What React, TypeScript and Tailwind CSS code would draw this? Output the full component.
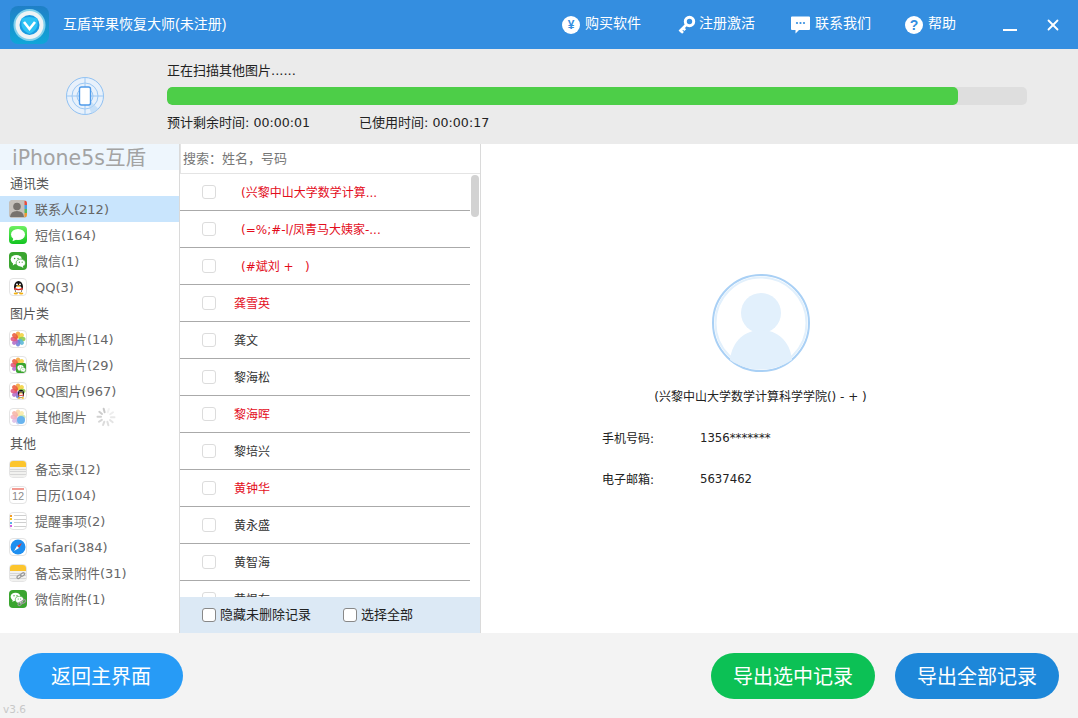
import React from "react";
import { X } from "lucide-react";

const font = { fontFamily: '"DejaVu Sans","Noto Sans CJK SC",sans-serif' };
const cjk = '"Liberation Sans","Noto Sans CJK SC",sans-serif';

function Tile({ children, bg = "#fff", border = true }: { children?: React.ReactNode; bg?: string; border?: boolean }) {
  return (
    <span
      className={"relative flex h-[18px] w-[18px] shrink-0 items-center justify-center overflow-hidden rounded-[4px] " + (border ? "border border-[#e4e4e4]" : "")}
      style={{ background: bg }}
    >
      {children}
    </span>
  );
}

function Petals({ faded = false }: { faded?: boolean }) {
  const cols = ["#f2a33a", "#f3d23e", "#8ccb4e", "#58b7d6", "#6d7fd8", "#b06cc8", "#e2557e", "#ea5c3d"];
  return (
    <svg width="16" height="16" viewBox="0 0 16 16" opacity={faded ? 0.45 : 1}>
      {cols.map((c, i) => (
        <ellipse key={i} cx="8" cy="3.9" rx="2.3" ry="3.4" fill={c} opacity="0.88" transform={`rotate(${i * 45} 8 8)`} />
      ))}
    </svg>
  );
}

function Penguin({ s = 14 }: { s?: number }) {
  return (
    <svg width={s} height={s} viewBox="0 0 14 14">
      <ellipse cx="7" cy="6.5" rx="4.2" ry="5.6" fill="#111" />
      <ellipse cx="7" cy="8.6" rx="3" ry="3.3" fill="#fff" />
      <circle cx="5.6" cy="4.1" r="0.9" fill="#fff" />
      <circle cx="8.4" cy="4.1" r="0.9" fill="#fff" />
      <ellipse cx="7" cy="5.6" rx="1.8" ry="0.8" fill="#f5b10f" />
      <path d="M3 7.3 Q7 9.4 11 7.3 L11 8.6 Q7 10.4 3 8.6Z" fill="#e0231c" />
      <ellipse cx="4.5" cy="12.6" rx="2" ry="0.9" fill="#f5b10f" />
      <ellipse cx="9.5" cy="12.6" rx="2" ry="0.9" fill="#f5b10f" />
    </svg>
  );
}

function Wechat({ w = 13 }: { w?: number }) {
  return (
    <svg width={w} height={w} viewBox="0 0 16 16">
      <ellipse cx="6.3" cy="6.6" rx="5.6" ry="4.7" fill="#fff" />
      <path d="M3.2 9.4 L2.8 12.6 L5.6 10.6Z" fill="#fff" />
      <ellipse cx="10.8" cy="10" rx="4.7" ry="3.9" fill="#fff" stroke="#3aa52f" strokeWidth="0.7" />
      <path d="M12.6 12.6 L13.4 14.9 L10.8 13.5Z" fill="#fff" />
      <circle cx="4.6" cy="5.4" r="0.75" fill="#3aa52f" />
      <circle cx="8" cy="5.4" r="0.75" fill="#3aa52f" />
      <circle cx="9.4" cy="9.2" r="0.6" fill="#3aa52f" />
      <circle cx="12.2" cy="9.2" r="0.6" fill="#3aa52f" />
    </svg>
  );
}

function Clip() {
  return (
    <svg className="absolute bottom-0 right-0" width="10" height="10" viewBox="0 0 10 10" fill="none" stroke="#9a9a9a" strokeWidth="1.2">
      <rect x="1" y="4.5" width="4.4" height="2.6" rx="1.3" transform="rotate(-40 3 6)" />
      <rect x="4.4" y="2.2" width="4.4" height="2.6" rx="1.3" transform="rotate(-40 6.6 3.5)" />
    </svg>
  );
}

function NoteLines({ yellow = "#fcc52d" }: { yellow?: string }) {
  return (
    <span className="flex h-full w-full flex-col">
      <span className="h-[6px] w-full" style={{ background: yellow }} />
      <span className="flex flex-1 flex-col justify-around bg-[#f1f1ef] py-[1px]">
        <span className="h-px w-full bg-[#d6d6d6]" />
        <span className="h-px w-full bg-[#d6d6d6]" />
        <span className="h-px w-full bg-[#d6d6d6]" />
      </span>
    </span>
  );
}

function Spinner() {
  return (
    <svg width="20" height="20" viewBox="0 0 20 20" className="ml-[9px]">
      {Array.from({ length: 10 }).map((_, i) => (
        <rect key={i} x="9" y="0.5" width="2" height="5.5" rx="1" fill="#bdbdbd" opacity={0.2 + (i % 10) * 0.07} transform={`rotate(${i * 36 + 20} 10 10)`} />
      ))}
    </svg>
  );
}

const icons: Record<string, React.ReactNode> = {
  contacts: (
    <Tile bg="#b7b3ad" border={false}>
      <svg width="18" height="18" viewBox="0 0 18 18">
        <rect width="18" height="18" fill="#c5c1bb" />
        <circle cx="8" cy="6.5" r="3.8" fill="#77736e" />
        <path d="M1 17 Q1.5 11 8 11 Q14.5 11 15 17Z" fill="#77736e" />
        <rect x="15.5" y="1" width="2.5" height="4" fill="#e84a3d" />
        <rect x="15.5" y="5" width="2.5" height="4" fill="#4a9fe0" />
        <rect x="15.5" y="9" width="2.5" height="4" fill="#58b85a" />
        <rect x="15.5" y="13" width="2.5" height="4" fill="#f09a30" />
      </svg>
    </Tile>
  ),
  sms: (
    <Tile bg="linear-gradient(#6ff063,#12c420)" border={false}>
      <svg width="18" height="18" viewBox="0 0 18 18">
        <ellipse cx="9" cy="8.5" rx="7" ry="5.6" fill="#fff" />
        <path d="M4.5 12 L3.4 15.2 L7.6 13.6Z" fill="#fff" />
      </svg>
    </Tile>
  ),
  wechat: (
    <Tile bg="#3aa52f" border={false}>
      <Wechat w={16} />
    </Tile>
  ),
  qq: (
    <Tile>
      <Penguin s={15} />
    </Tile>
  ),
  photos: (
    <Tile>
      <Petals />
    </Tile>
  ),
  wxphotos: (
    <Tile>
      <Petals />
      <span className="absolute bottom-0 right-0 flex h-[10px] w-[10px] items-center justify-center rounded-[2px] bg-[#3aa52f]">
        <Wechat w={9} />
      </span>
    </Tile>
  ),
  qqphotos: (
    <Tile>
      <Petals />
      <span className="absolute bottom-0 right-0 flex">
        <Penguin s={10} />
      </span>
    </Tile>
  ),
  other: (
    <Tile>
      <Petals faded />
      <span className="absolute bottom-[1px] right-[1px] h-[8px] w-[8px] rounded-full bg-[#69b4ee]" />
    </Tile>
  ),
  notes: (
    <Tile>
      <NoteLines />
    </Tile>
  ),
  calendar: (
    <Tile>
      <span className="flex h-full w-full flex-col items-center">
        <span className="mt-[1px] h-[2px] w-[12px] bg-[#f29a92]" />
        <span className="text-[11px] leading-[12px] text-[#8c8c8c]" style={{ fontFamily: '"Liberation Sans",sans-serif' }}>12</span>
      </span>
    </Tile>
  ),
  reminder: (
    <Tile>
      <span className="flex h-full w-full flex-col justify-around py-[1px]">
        {["#f59a23", "#f5c423", "#5bb0e8", "#d060e0"].map((c) => (
          <span key={c} className="flex items-center gap-[2px]">
            <span className="h-[2px] w-[2px]" style={{ background: c }} />
            <span className="h-px flex-1 bg-[#cfcfcf]" />
          </span>
        ))}
      </span>
    </Tile>
  ),
  safari: (
    <Tile>
      <svg width="16" height="16" viewBox="0 0 16 16">
        <circle cx="8" cy="8" r="7.5" fill="#1e8ff0" />
        <path d="M12 4 L7 7 L9 9Z" fill="#f0352a" />
        <path d="M4 12 L7 7 L9 9Z" fill="#fff" />
      </svg>
    </Tile>
  ),
  noteclip: (
    <Tile>
      <NoteLines />
      <Clip />
    </Tile>
  ),
  wxclip: (
    <Tile bg="#3aa52f" border={false}>
      <span className="absolute left-[1px] top-[1px] flex">
        <Wechat w={14} />
      </span>
      <Clip />
    </Tile>
  ),
};

function Cat({ t }: { t: string }) {
  return <div className="flex h-[26px] items-center pl-[10px] pt-[1px] text-[13px] text-[#555]">{t}</div>;
}

function Item({ icon, t, active, extra }: { icon: string; t: string; active?: boolean; extra?: React.ReactNode }) {
  return (
    <div className={"flex h-[26px] items-center pl-[9px] text-[13px] text-[#666] " + (active ? "bg-[#c9e5fd]" : "")}>
      {icons[icon]}
      <span className="ml-[8px] pt-[1px]">{t}</span>
      {extra}
    </div>
  );
}

function Row({ name, red, indent }: { name: string; red?: boolean; indent?: boolean }) {
  return (
    <div className="flex h-[37px] shrink-0 items-center border-b border-[#aaaaaa]">
      <span className="ml-[22px] h-[14px] w-[14px] shrink-0 rounded-[3px] border border-[#dcdcdc] bg-white" />
      <span
        className={(indent ? "ml-[25px] " : "ml-[18px] ") + "whitespace-pre pt-[1px] text-[12px] " + (red ? "text-[#e30d1c]" : "text-[#333]")}
      >
        {name}
      </span>
    </div>
  );
}

function Check({ label }: { label: string }) {
  return (
    <span className="flex items-center">
      <span className="h-[14px] w-[14px] rounded-[3px] border border-[#888] bg-white" />
      <span className="ml-[4px] -mt-[1px] text-[13px] text-[#222]">{label}</span>
    </span>
  );
}

function Nav({ icon, t, gap = "ml-[3px]" }: { icon: React.ReactNode; t: string; gap?: string }) {
  return (
    <span className="flex items-center text-[14px] text-white">
      {icon}
      <span className={gap + " -mt-[2px]"}>{t}</span>
    </span>
  );
}

export default function App() {
  return (
    <div className="flex h-[718px] w-[1078px] flex-col overflow-hidden bg-[#f3f3f3]" style={font}>
      <header className="flex h-[49px] shrink-0 items-center bg-[#348ee0] text-white">
        <svg className="ml-[10px]" width="39" height="38" viewBox="0 0 39 38">
          <defs>
            <linearGradient id="lg" x1="0" y1="0" x2="0" y2="1">
              <stop offset="0" stopColor="#1f7fc6" />
              <stop offset="1" stopColor="#0fa6d8" />
            </linearGradient>
          </defs>
          <rect width="39" height="38" rx="8" fill="url(#lg)" />
          <circle cx="19.5" cy="19" r="16" fill="#7fd0ec" />
          <circle cx="19.5" cy="19" r="14" fill="#eef3f5" />
          <circle cx="19.5" cy="19" r="10" fill="#1a9ae0" />
          <path d="M11.5 12.5 Q19.5 9.5 27.5 12.5 L27.5 20 Q25.5 25.5 19.5 28 Q13.5 25.5 11.5 20Z" fill="#2cc2f5" />
          <path d="M14 16 L19.5 23 L25 16" fill="none" stroke="#fff" strokeWidth="2.6" />
        </svg>
        <span className="ml-[14px] text-[14px]" style={{ fontFamily: cjk }}>互盾苹果恢复大师(未注册)</span>
        <div className="ml-auto flex items-center">
          <Nav
            t="购买软件"
            gap="ml-[5px]"
            icon={
              <span className="flex h-[18px] w-[18px] items-center justify-center rounded-full bg-white text-[12px] font-bold leading-none text-[#348ee0]" style={{ fontFamily: '"Liberation Sans",sans-serif' }}>
                ¥
              </span>
            }
          />
          <span className="ml-[36px]">
            <Nav
              t="注册激活"
              gap="ml-[3px]"
              icon={
                <svg width="19" height="19" viewBox="0 0 19 19" fill="none">
                  <circle cx="12.5" cy="6.5" r="4.2" stroke="#fff" strokeWidth="3" />
                  <path d="M9.5 9.5 L2.5 16.5 M3.6 15.4 L6 17.8 M6 13 L8.2 15.2" stroke="#fff" strokeWidth="2.6" />
                </svg>
              }
            />
          </span>
          <span className="ml-[36px]">
            <Nav
              t="联系我们"
              gap="ml-[5px]"
              icon={
                <svg width="19" height="18" viewBox="0 0 19 18">
                  <path d="M1 0.5 H18 a1 1 0 0 1 1 1 V13 a1 1 0 0 1-1 1 H8 L4.5 17.5 V14 H1 a1 1 0 0 1-1-1 V1.5 a1 1 0 0 1 1-1Z" fill="#fff" />
                  <circle cx="6" cy="7" r="1.1" fill="#348ee0" />
                  <circle cx="9.5" cy="7" r="1.1" fill="#348ee0" />
                  <circle cx="13" cy="7" r="1.1" fill="#348ee0" />
                </svg>
              }
            />
          </span>
          <span className="ml-[34px]">
            <Nav
              t="帮助"
              gap="ml-[5px]"
              icon={
                <span className="flex h-[18px] w-[18px] items-center justify-center rounded-full bg-white text-[14px] font-bold leading-none text-[#348ee0]" style={{ fontFamily: '"Liberation Sans",sans-serif' }}>
                  ?
                </span>
              }
            />
          </span>
          <span className="ml-[47px] mt-[11px] h-[2px] w-[14px] bg-white" />
          <X className="ml-[27px] mr-[16px] text-white" size={18} strokeWidth={2.4} />
        </div>
      </header>

      <section className="flex h-[95px] shrink-0 items-start bg-[#ebebeb]">
        <svg className="ml-[66px] mt-[28px] shrink-0" width="38" height="38" viewBox="0 0 38 38" fill="none" stroke="#9cc8f4" strokeWidth="1">
          <circle cx="19" cy="19" r="18.5" fill="#e8f1fb" stroke="#8fc0f2" />
          <circle cx="19" cy="19" r="13" />
          <circle cx="19" cy="19" r="8" />
          <path d="M19 0 V38 M0 19 H38" />
          <path d="M19 19 L32 32 A18.5 18.5 0 0 0 37 25Z" fill="#b9d8f7" stroke="none" opacity="0.7" transform="rotate(25 19 19)" />
          <rect x="13.5" y="10" width="11" height="18" rx="2" fill="#fff" stroke="#4f9bea" strokeWidth="1.4" />
        </svg>
        <div className="ml-[63px] mt-[13px] flex w-[860px] flex-col">
          <div className="text-[13px] leading-[17px] text-[#222]">正在扫描其他图片......</div>
          <div className="mt-[8px] h-[18px] w-[860px] overflow-hidden rounded-[5px] bg-[#dedede]">
            <div className="h-full w-[791px] rounded-[5px] bg-[#4dce48]" />
          </div>
          <div className="mt-[9px] flex text-[13px] leading-[17px] text-[#222]">
            <span>预计剩余时间: <span className="text-[12.6px]">00:00:01</span></span>
            <span className="ml-[49px]">已使用时间: <span className="text-[12.6px]">00:00:17</span></span>
          </div>
        </div>
      </section>

      <main className="flex h-[489px] shrink-0 bg-white">
        <aside className="w-[180px] shrink-0 border-r border-[#dadada]">
          <div className="flex h-[26px] items-center bg-[#eef6fd] pl-[12px] pt-[2px] text-[20.5px] leading-none text-[#a3a3a3]">iPhone5s互盾</div>
          <Cat t="通讯类" />
          <Item icon="contacts" t="联系人(212)" active />
          <Item icon="sms" t="短信(164)" />
          <Item icon="wechat" t="微信(1)" />
          <Item icon="qq" t="QQ(3)" />
          <Cat t="图片类" />
          <Item icon="photos" t="本机图片(14)" />
          <Item icon="wxphotos" t="微信图片(29)" />
          <Item icon="qqphotos" t="QQ图片(967)" />
          <Item icon="other" t="其他图片" extra={<Spinner />} />
          <Cat t="其他" />
          <Item icon="notes" t="备忘录(12)" />
          <Item icon="calendar" t="日历(104)" />
          <Item icon="reminder" t="提醒事项(2)" />
          <Item icon="safari" t="Safari(384)" />
          <Item icon="noteclip" t="备忘录附件(31)" />
          <Item icon="wxclip" t="微信附件(1)" />
        </aside>

        <div className="flex w-[301px] shrink-0 flex-col border-r border-[#dadada]">
          <div className="flex h-[30px] shrink-0 items-center border-b border-l border-[#e4e4e4] pl-[2px] pt-[1px] text-[13px] text-[#777]">搜索：姓名，号码</div>
          <div className="relative min-h-0 flex-1 overflow-hidden">
            <div className="flex w-[290px] flex-col">
              <Row name="(兴黎中山大学数学计算..." red indent />
              <Row name="(=%;#-l/凤青马大姨家-..." red indent />
              <Row name="(#斌刘 +   )" red indent />
              <Row name="龚雪英" red />
              <Row name="龚文" />
              <Row name="黎海松" />
              <Row name="黎海晖" red />
              <Row name="黎培兴" />
              <Row name="黄钟华" red />
              <Row name="黄永盛" />
              <Row name="黄智海" />
              <Row name="黄恨有" />
            </div>
            <span className="absolute right-[1px] top-[1px] h-[42px] w-[8px] rounded-[4px] bg-[#d2d2d2]" />
          </div>
          <div className="flex h-[36px] shrink-0 items-center bg-[#dce9f5] pl-[22px]">
            <Check label="隐藏未删除记录" />
            <span className="ml-[32px]">
              <Check label="选择全部" />
            </span>
          </div>
        </div>

        <div className="flex min-w-0 flex-1 flex-col items-center pr-[38px] pt-[130px]">
          <svg width="98" height="98" viewBox="0 0 98 98">
            <circle cx="49" cy="49" r="48" fill="#fff" stroke="#a9d0f5" strokeWidth="2" />
            <circle cx="49" cy="49" r="45.5" fill="none" stroke="#e2f0fc" strokeWidth="2" />
            <circle cx="49" cy="39" r="20" fill="#e2f0fc" />
            <path d="M18 86 C20 66 34 56 49 56 C64 56 78 66 80 86 C70 93 60 95 49 95 C38 95 28 93 18 86Z" fill="#e2f0fc" />
          </svg>
          <div className="mt-[17px] whitespace-pre text-[12px] leading-[16px] text-[#222]">(兴黎中山大学数学计算科学学院() - + )</div>
          <div className="mt-[26px] w-full pl-[121px] text-[12px] text-[#222]">
            <div className="flex h-[16px] items-center">
              <span className="w-[98px]">手机号码:</span>
              <span className="text-[11.7px]">1356*******</span>
            </div>
            <div className="mt-[25px] flex h-[16px] items-center">
              <span className="w-[98px]">电子邮箱:</span>
              <span className="text-[11.7px]">5637462</span>
            </div>
          </div>
        </div>
      </main>

      <footer className="relative flex h-[85px] shrink-0 items-start pt-[20px]">
        <button className="ml-[19px] flex h-[46px] w-[164px] items-center justify-center rounded-[23px] bg-[#279bf6] pt-[1px] text-[20px] text-white">返回主界面</button>
        <button className="ml-auto flex h-[46px] w-[164px] items-center justify-center rounded-[23px] bg-[#0cc155] pt-[1px] text-[20px] text-white">导出选中记录</button>
        <button className="ml-[20px] mr-[19px] flex h-[46px] w-[164px] items-center justify-center rounded-[23px] bg-[#1d87d9] pt-[1px] text-[20px] text-white">导出全部记录</button>
        <span className="absolute bottom-[2px] left-[3px] text-[10.5px] leading-[14px] text-[#c8c8c8]">v3.6</span>
      </footer>
    </div>
  );
}
